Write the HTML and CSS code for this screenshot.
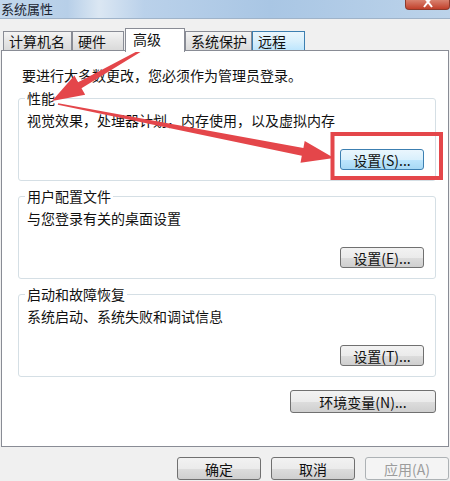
FILE: index.html
```html
<!DOCTYPE html>
<html>

<head>
    <meta charset="utf-8">
    <title>系统属性</title>
    <link rel="stylesheet" href="styles.css">
</head>

<body>
    <div class="titlebar">
        <span class="title">系统属性</span>
        <span class="close">
            <svg width="12" height="8" viewBox="0 0 12 8"><path d="M2 -3 L10 7 M10 -3 L2 7" /></svg>
        </span>
    </div>

    <div class="tabs">
        <span class="tab tab-name">计算机名</span>
        <span class="tab tab-hw">硬件</span>
        <span class="tab tab-adv">高级</span>
        <span class="tab tab-prot">系统保护</span>
        <span class="tab tab-remote">远程</span>
    </div>

    <div class="panel">
        <p class="notice">要进行大多数更改，您必须作为管理员登录。</p>

        <fieldset class="group">
            <legend>性能</legend>
            <p class="desc">视觉效果，处理器计划，内存使用，以及虚拟内存</p>
            <div class="row">
                <button class="btn btn-focus">设置(S)...</button>
            </div>
        </fieldset>

        <fieldset class="group">
            <legend>用户配置文件</legend>
            <p class="desc">与您登录有关的桌面设置</p>
            <div class="row">
                <button class="btn">设置(E)...</button>
            </div>
        </fieldset>

        <fieldset class="group">
            <legend>启动和故障恢复</legend>
            <p class="desc">系统启动、系统失败和调试信息</p>
            <div class="row">
                <button class="btn">设置(T)...</button>
            </div>
        </fieldset>

        <div class="row env-row">
            <button class="btn btn-env">环境变量(N)...</button>
        </div>
    </div>

    <div class="footer">
        <button class="btn btn-foot">确定</button>
        <button class="btn btn-foot">取消</button>
        <button class="btn btn-foot btn-off">应用(A)</button>
    </div>

    <!-- red markup drawn on top of the dialog -->
    <svg class="marks" width="450" height="481" viewBox="0 0 450 481">
        <polygon points="147.4,47.7 81.5,88.2 85.2,94.8 52,101 74.4,75.6 78.1,82.2 146.6,46.3" />
        <polygon points="58.2,103.2 303.4,148 304.7,141.1 334,158 300.5,162.7 301.8,155.8 57.8,104.8" />
        <rect x="332.5" y="134" width="108.5" height="44" />
    </svg>
</body>

</html>
```

FILE: styles.css
```css
body {
    margin: 0;
    width: 450px;
    height: 481px;
    overflow: hidden;
    position: relative;
    background-color: #f0f0f0;
    font-family: "Noto Sans CJK SC", "Liberation Sans", sans-serif;
    font-size: 14px;
    line-height: 16px;
    color: #111;
}

.titlebar {
    display: flex;
    justify-content: space-between;
    align-items: flex-start;
    height: 18px;
    border-bottom: 1px solid #9fb3c9;
    background: linear-gradient(90deg, #c2d7ec 0%, #b7cfe8 15%, #dbe7f3 22%, #bad1ea 32%, #a9c6e4 60%, #bcd3ea 100%);
}

.title {
    margin-left: 1px;
    font-size: 13px;
    line-height: 18px;
    color: #1b2430;
}

.close {
    display: flex;
    justify-content: center;
    width: 43px;
    height: 9px;
    border-radius: 0 0 4px 4px;
    background: linear-gradient(#d9826f, #c1402b);
    border: 1px solid #8d3a2b;
    border-top: none;
}

.close path {
    stroke: #fff;
    stroke-width: 2;
}

.tabs {
    display: flex;
    align-items: flex-end;
    height: 31px;
    padding-left: 3px;
}

.tab {
    box-sizing: border-box;
    height: 19px;
    padding-left: 5px;
    border: 1px solid #898c95;
    border-bottom: none;
    background: linear-gradient(#f4f4f4, #e6e6e6 50%, #dadada);
    line-height: 18px;
}

.tab-name {
    width: 69px;
}

.tab-hw {
    width: 52px;
}

.tab-adv {
    position: relative;
    z-index: 1;
    width: 60px;
    height: 24px;
    margin-left: 1px;
    margin-bottom: -2px;
    padding-left: 7px;
    background: #fff;
    line-height: 21px;
}

.tab-prot {
    width: 67px;
}

.tab-remote {
    width: 53px;
    border-color: #3c7fb1;
    background: linear-gradient(#eaf6fd, #d9f0fc 50%, #bee6fd);
}

.panel {
    box-sizing: border-box;
    height: 397px;
    margin: 0 1px;
    padding: 16px 12px 0 16px;
    background: #fff;
    border: 1px solid #898c95;
}

.notice {
    margin: 0 0 7px 4px;
}

.group {
    margin: 0 0 7px 0;
    padding: 0 11px 10px 8px;
    border: 1px solid #d5dfe5;
    border-radius: 3px;
}

.group legend {
    margin-left: -2px;
    padding: 0 2px;
}

.desc {
    margin: 6px 0 0 0;
}

.row {
    display: flex;
    justify-content: flex-end;
    margin-top: 21px;
}

.env-row {
    margin-top: 13px;
}

.btn {
    box-sizing: border-box;
    width: 84px;
    height: 21px;
    padding: 0;
    border: 1px solid #707070;
    border-radius: 3px;
    background: linear-gradient(#f2f2f2, #ebebeb 50%, #dddddd 51%, #cfcfcf);
    font-family: "Noto Sans CJK SC", "Liberation Sans", sans-serif;
    font-size: 14px;
    line-height: 18px;
    color: #111;
}

.btn-focus {
    border-color: #3c7fb1;
    background: linear-gradient(#eaf6fd, #d9f0fc 50%, #bee6fd 51%, #a7d9f5);
}

.btn-env {
    width: 146px;
    height: 23px;
}

.footer {
    display: flex;
    justify-content: flex-end;
    gap: 10px;
    padding: 10px 1px 0 0;
}

.btn-foot {
    height: 23px;
}

.btn-off {
    color: #9c9c9c;
    border-color: #adb2b5;
    background: #f4f4f4;
}

.marks {
    position: absolute;
    left: 0;
    top: 0;
    pointer-events: none;
}

.marks polygon {
    fill: #e4464a;
}

.marks rect {
    fill: none;
    stroke: #e4464a;
    stroke-width: 4;
}
```
